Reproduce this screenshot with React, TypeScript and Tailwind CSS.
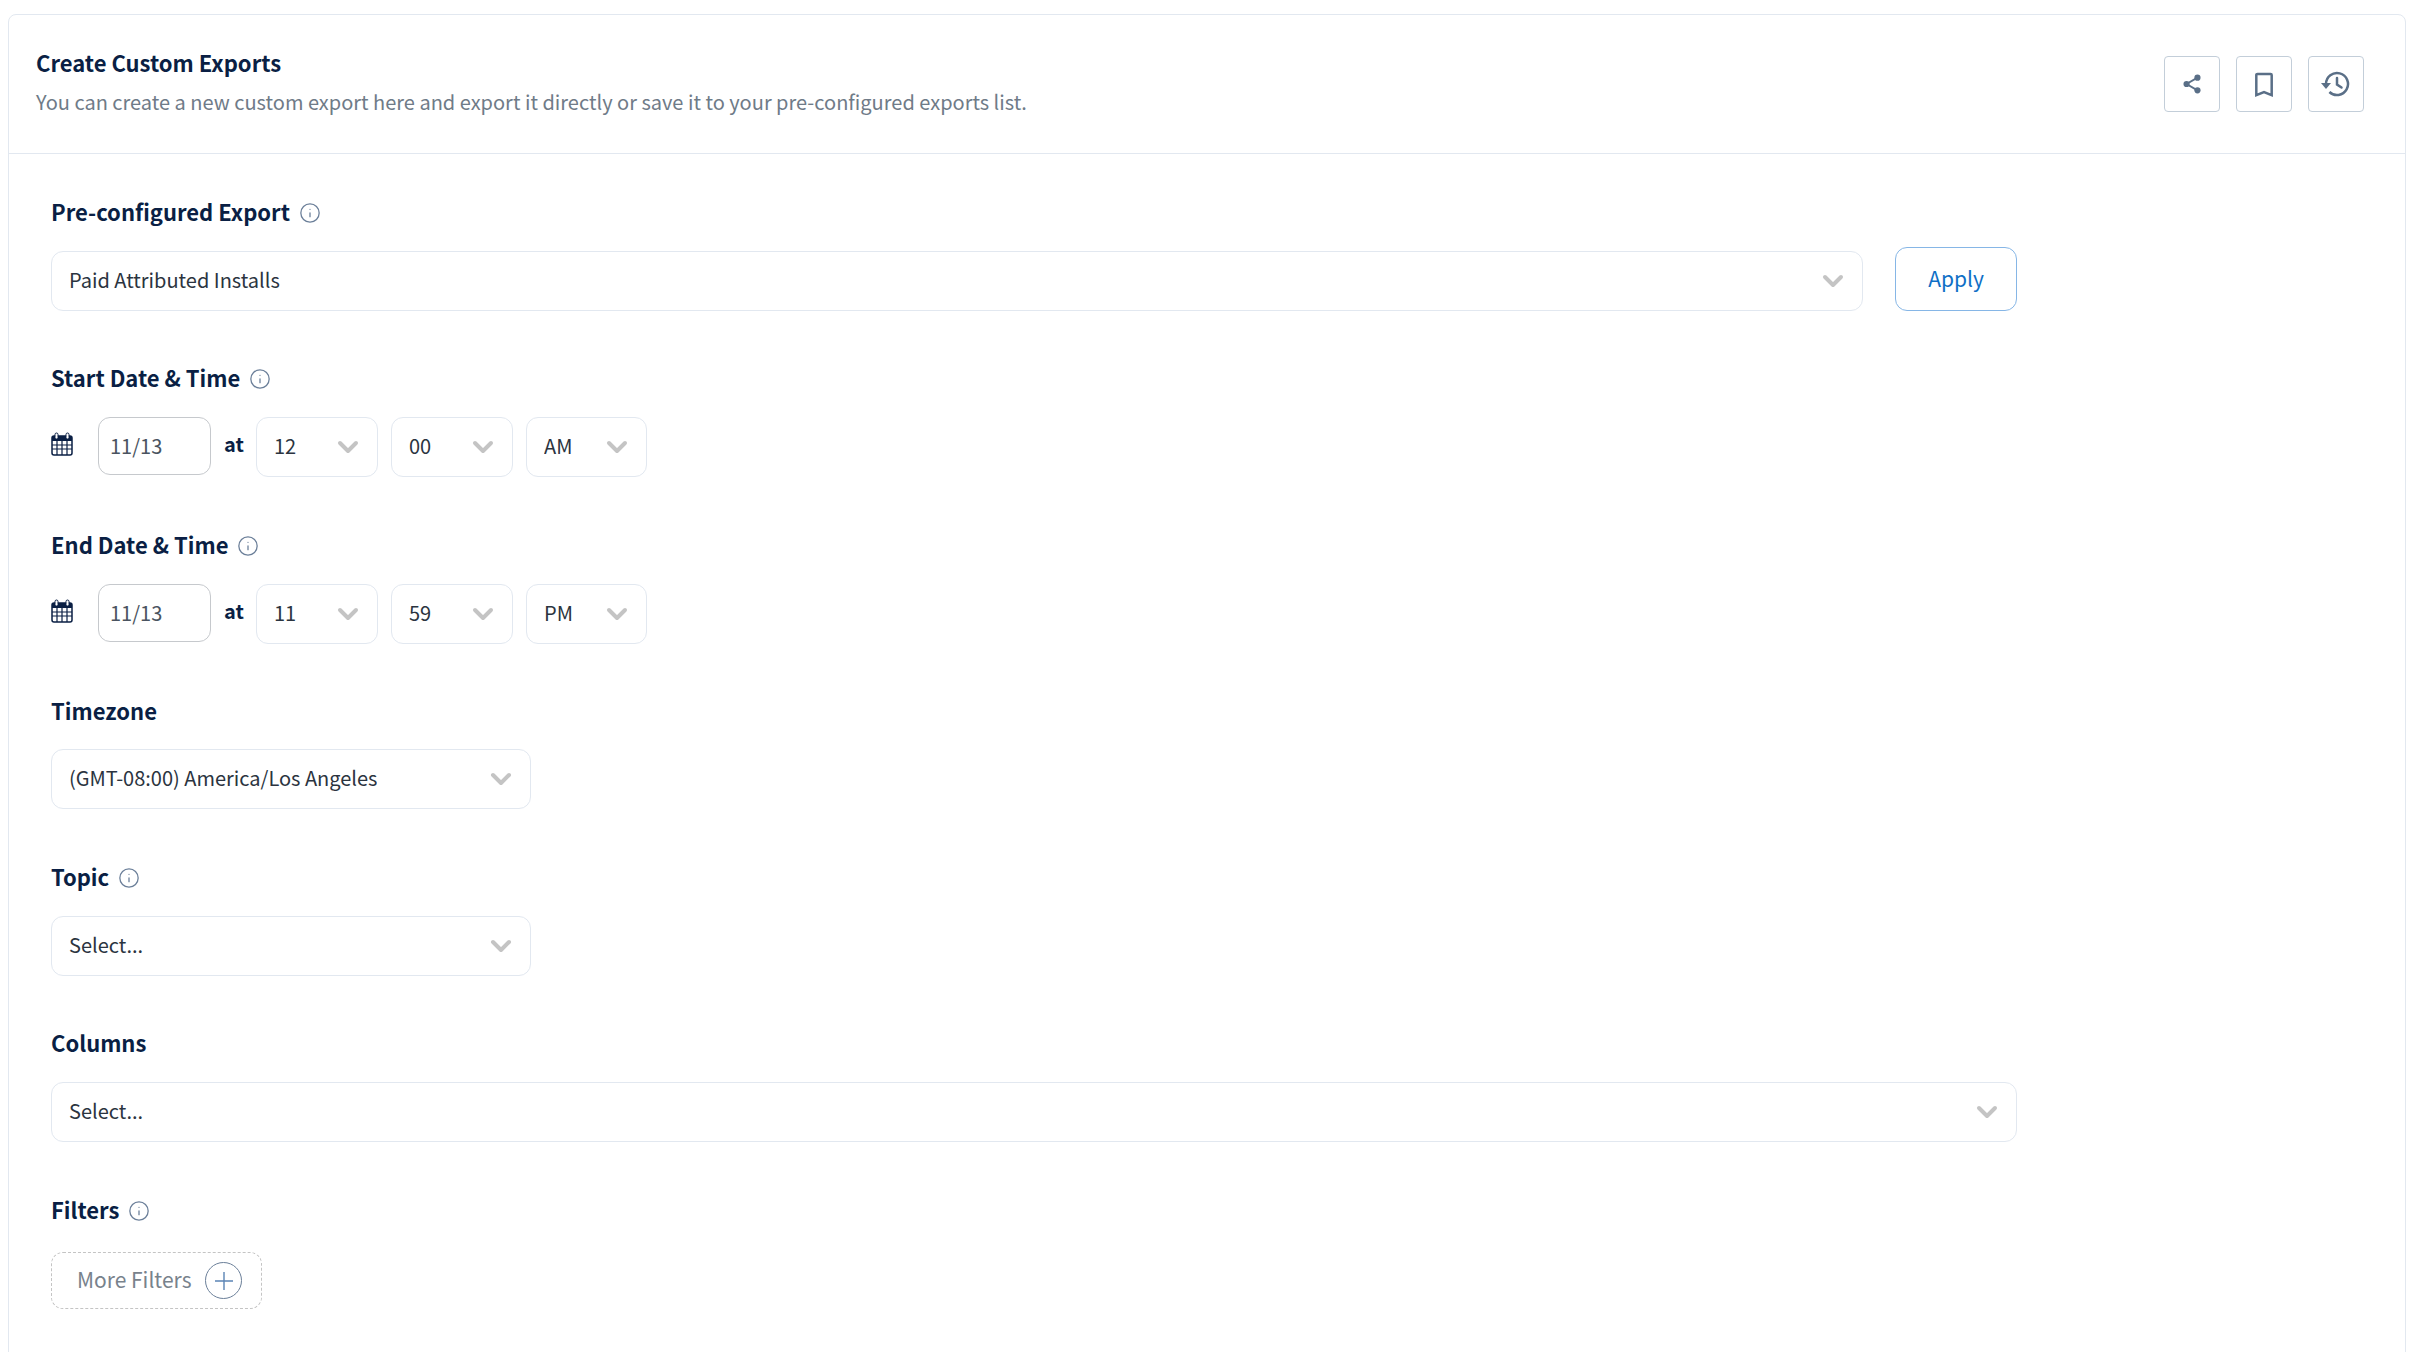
import { ChevronDown, Info } from "lucide-react";

const font = { fontFamily: '"Noto Sans CJK JP", "Noto Sans", sans-serif' };

function Label({ text, info = true }: { text: string; info?: boolean }) {
  return (
    <div className="flex h-[28px] items-center gap-[9px] pb-[2px] text-[22px] font-semibold leading-[28px] text-[#0a1f44]">
      {text}
      {info && <Info className="mt-[4px] h-[22px] w-[22px] text-[#6b7f99]" strokeWidth={1.4} />}
    </div>
  );
}

function Select({ value, className }: { value: string; className: string }) {
  return (
    <div
      className={`flex h-[60px] shrink-0 items-center justify-between rounded-[12px] border border-[#e2e8f0] bg-white pl-[17px] pr-[13px] text-[20px] text-[#2b3440] ${className}`}
    >
      <span className="-mt-[2px] truncate">{value}</span>
      <ChevronDown className="h-[32px] w-[32px] shrink-0 text-[#c4c4c4]" strokeWidth={3} />
    </div>
  );
}

function CalendarIcon() {
  return (
    <svg width="22" height="24" viewBox="0 0 22 24" className="shrink-0 text-[#0a1f44]">
      <rect x="1" y="4" width="20" height="19" rx="2" fill="none" stroke="currentColor" strokeWidth="1.5" />
      <rect x="1" y="4" width="20" height="5" fill="currentColor" />
      <path d="M1 13h20M1 17h20M6 9v14M11 9v14M16 9v14" stroke="currentColor" strokeWidth="1.2" />
      <rect x="4" y="1" width="3" height="6" rx="1.5" fill="#fff" stroke="currentColor" strokeWidth="1" />
      <rect x="15" y="1" width="3" height="6" rx="1.5" fill="#fff" stroke="currentColor" strokeWidth="1" />
    </svg>
  );
}

function DateRow({ hour, minute, period }: { hour: string; minute: string; period: string }) {
  return (
    <div className="mt-[25px] flex items-start">
      <div className="mt-[15px] w-[47px] shrink-0">
        <CalendarIcon />
      </div>
      <div className="flex h-[58px] w-[113px] shrink-0 items-center rounded-[12px] border border-[#c6c9cd] pl-[11px] text-[20px] text-[#4a5460]">
        <span className="-mt-[1px]">11/13</span>
      </div>
      <div className="mt-[12px] w-[45px] shrink-0 pl-[13px] text-[20px] font-bold leading-[30px] text-[#0a1f44]">at</div>
      <Select value={hour} className="w-[122px]" />
      <Select value={minute} className="ml-[13px] w-[122px]" />
      <Select value={period} className="ml-[13px] w-[121px]" />
    </div>
  );
}

function IconButton({ children }: { children: React.ReactNode }) {
  return (
    <button
      type="button"
      className="flex h-[56px] w-[56px] items-center justify-center rounded-[4px] border border-[#c3ced9] bg-white text-[#5a6f87]"
    >
      {children}
    </button>
  );
}

export default function App() {
  return (
    <div className="h-[1352px] overflow-hidden bg-white pl-[8px] pr-[14px] pt-[14px]" style={font}>
      <div className="h-[1400px] rounded-t-[8px] border border-[#e2e8f0]">
        <div className="flex h-[139px] items-start justify-between border-b border-[#e2e8f0] pl-[27px] pr-[41px]">
          <div>
            <h1 className="mt-[30px] text-[22px] font-semibold leading-[34px] text-[#0a1f44]">
              Create Custom Exports
            </h1>
            <p className="mt-[7px] text-[20px] leading-[32px] text-[#6f7b88]">
              You can create a new custom export here and export it directly or save it to your pre-configured exports list.
            </p>
          </div>
          <div className="mt-[41px] flex gap-[16px]">
            <IconButton>
              <svg width="20" height="22" viewBox="0 0 22 24" fill="currentColor">
                <circle cx="17" cy="5" r="3.4" />
                <circle cx="5" cy="12" r="3.4" />
                <circle cx="17" cy="19" r="3.4" />
                <path d="M17 5 5 12l12 7" fill="none" stroke="currentColor" strokeWidth="2" />
              </svg>
            </IconButton>
            <IconButton>
              <svg width="20" height="25" viewBox="0 0 20 26" fill="none" stroke="currentColor" strokeWidth="2.6">
                <path d="M2 24V3.2C2 2.5 2.5 2 3.2 2h13.6c.7 0 1.2.5 1.2 1.2V24l-8-3-8 3Z" />
              </svg>
            </IconButton>
            <IconButton>
              <svg width="30" height="26" viewBox="0 0 30 26" fill="none" stroke="currentColor" strokeWidth="2.5" className="-ml-[2px]">
                <path d="M6 13a11 11 0 1 1 3.4 8" />
                <path d="M1 12h10l-5 6-5-6Z" fill="currentColor" stroke="none" />
                <path d="M17 7v6.5l4.5 3" strokeLinecap="round" />
              </svg>
            </IconButton>
          </div>
        </div>

        <div className="pl-[42px] pt-[44px]">
          <section className="h-[166px]">
            <Label text="Pre-configured Export" />
            <div className="mt-[21px] flex items-center gap-[32px]">
              <Select value="Paid Attributed Installs" className="mt-[3px] w-[1812px]" />
              <button
                type="button"
                className="h-[64px] w-[122px] rounded-[12px] border border-[#86b6e6] bg-white text-[21px] text-[#0f6fc6]"
              >
                Apply
              </button>
            </div>
          </section>
          <section className="h-[167px]">
            <Label text="Start Date & Time" />
            <DateRow hour="12" minute="00" period="AM" />
          </section>
          <section className="h-[166px]">
            <Label text="End Date & Time" />
            <DateRow hour="11" minute="59" period="PM" />
          </section>
          <section className="h-[166px]">
            <Label text="Timezone" info={false} />
            <Select value="(GMT-08:00) America/Los Angeles" className="mt-[24px] w-[480px]" />
          </section>
          <section className="h-[166px]">
            <Label text="Topic" />
            <Select value="Select..." className="mt-[25px] w-[480px]" />
          </section>
          <section className="h-[167px]">
            <Label text="Columns" info={false} />
            <Select value="Select..." className="mt-[25px] w-[1966px]" />
          </section>
          <section>
            <Label text="Filters" />
            <div className="mt-[28px] flex h-[57px] w-[211px] items-center justify-between rounded-[12px] border border-dashed border-[#c4c4c4] pl-[25px] pr-[19px] text-[21px] text-[#78828c]">
              <span className="-mt-[2px]">More Filters</span>
              <span className="flex h-[37px] w-[37px] items-center justify-center rounded-full border border-[#6b7f99]">
                <svg width="18" height="18" viewBox="0 0 18 18" stroke="#5b84b5" strokeWidth="1.4">
                  <path d="M9 0v18M0 9h18" />
                </svg>
              </span>
            </div>
          </section>
        </div>
      </div>
    </div>
  );
}
